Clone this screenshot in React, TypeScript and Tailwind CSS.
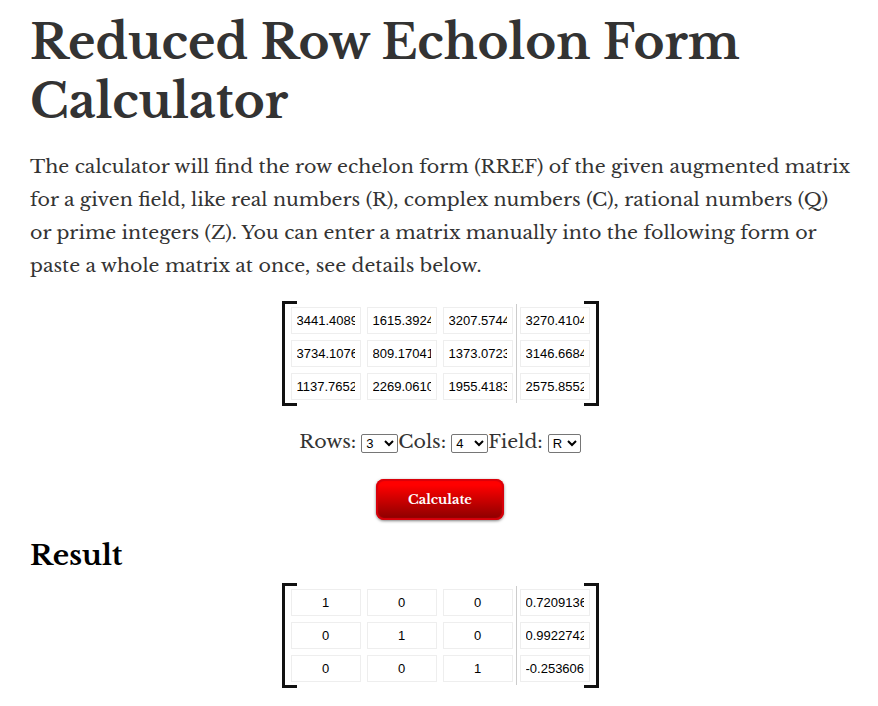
import { useState } from "react";

const input = [
  ["3441.40893", "1615.39242", "3207.57441", "3270.41043"],
  ["3734.10761", "809.170413", "1373.07232", "3146.66841"],
  ["1137.76521", "2269.06102", "1955.41832", "2575.85521"],
];

const result = [
  ["1", "0", "0", "0.72091362"],
  ["0", "1", "0", "0.99227421"],
  ["0", "0", "1", "-0.2536061"],
];

const serif = "font-['Libre_Baskerville','Liberation_Serif',serif]";

function Matrix({ name, values, readOnly }: { name: string; values: string[][]; readOnly?: boolean }) {
  return (
    <div className="relative mx-auto w-fit px-[6px] py-[3px]">
      <table className="border-separate border-spacing-0">
        <tbody>
          {values.map((row, r) => (
            <tr key={r}>
              {row.map((value, c) => (
                <td key={c} className="p-[3px] leading-none last:border-l last:border-[#ccc]">
                  <input
                    aria-label={`${name} row ${r + 1}, column ${c + 1}`}
                    defaultValue={value}
                    readOnly={readOnly}
                    className="block h-[27px] w-[70px] border border-[#eee] bg-white px-[5px] text-center font-['Liberation_Sans',sans-serif] text-[13px] text-black"
                  />
                </td>
              ))}
            </tr>
          ))}
        </tbody>
      </table>
      <div className="pointer-events-none absolute inset-y-0 left-0 w-[15px] border-[3px] border-r-0 border-[#111]" />
      <div className="pointer-events-none absolute inset-y-0 right-0 w-[15px] border-[3px] border-l-0 border-[#111]" />
    </div>
  );
}

function Choice({ id, label, options, initial, width }: { id: string; label: string; options: string[]; initial: string; width: string }) {
  const [value, setValue] = useState(initial);
  return (
    <div className="flex items-center gap-[5px]">
      <label htmlFor={id}>{label}</label>
      <select
        id={id}
        value={value}
        onChange={(e) => setValue(e.target.value)}
        className={`mt-[3px] h-[19px] rounded-[2px] border border-[#767676] bg-white font-['Liberation_Sans',sans-serif] text-[13px] leading-none text-black ${width}`}
      >
        {options.map((o) => (
          <option key={o}>{o}</option>
        ))}
      </select>
    </div>
  );
}

export default function App() {
  return (
    <main className={`bg-white pt-[13px] pr-7 pb-[18px] pl-[30px] text-[#333] ${serif}`}>
      <h1 className="text-[47px] leading-[59px] font-bold">
        Reduced Row Echolon Form
        <br />
        Calculator
      </h1>
      <p className="mt-[19px] text-[19px] leading-[33px]">
        The calculator will find the row echelon form (RREF) of the given augmented matrix
        for a given field, like real numbers (R), complex numbers (C), rational numbers (Q)
        or prime integers (Z). You can enter a matrix manually into the following form or
        paste a whole matrix at once, see details below.
      </p>
      <form className="mt-[19px]" onSubmit={(e) => e.preventDefault()}>
        <Matrix name="Matrix" values={input} />
        <div className="mt-[19px] flex justify-center text-[19px] leading-[33px]">
          <Choice id="rows" label="Rows:" options={["2", "3", "4", "5", "10"]} initial="3" width="w-[37px]" />
          <Choice id="cols" label="Cols:" options={["2", "3", "4", "5", "10"]} initial="4" width="w-[37px]" />
          <Choice id="field" label="Field:" options={["R", "C", "Q", "Z"]} initial="R" width="w-[33px]" />
        </div>
        <button
          type="submit"
          className="mx-auto mt-[21px] block h-[41px] w-32 rounded-lg bg-linear-to-b from-[#ff0000] from-15% to-[#8f0000] to-95% text-[13px] font-bold text-white shadow-[inset_0_0_1px_2px_#d9000a,0_1px_3px_rgba(0,0,0,0.5)]"
        >
          Calculate
        </button>
      </form>
      <h2 className="mt-[18px] mb-[10px] text-[28px] leading-[35px] font-bold text-black">Result</h2>
      <Matrix name="Result" values={result} readOnly />
    </main>
  );
}
